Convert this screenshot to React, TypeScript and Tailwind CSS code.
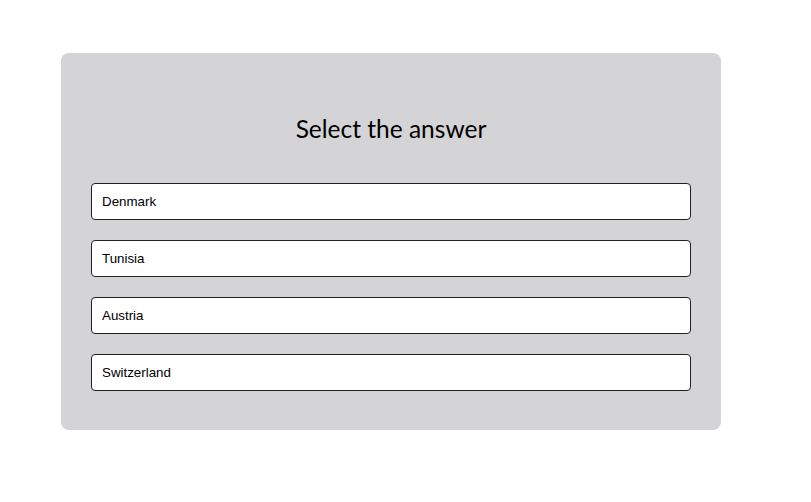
import React from 'react';

const answers = ['Denmark', 'Tunisia', 'Austria', 'Switzerland'];

export default function App() {
  return (
    <div className="min-h-screen bg-white pt-[53px] pl-[61px]">
      <div className="w-[660px] rounded-[8px] bg-[#d4d4d6] px-[30px] pt-[58px] pb-[39px]">
        <h1 className="text-center text-[24.5px] leading-[36px] text-black" style={{ fontFamily: 'Lato, sans-serif' }}>
          Select the answer
        </h1>
        <div className="mt-[36px] flex flex-col gap-[20px]">
          {answers.map((a) => (
            <button
              key={a}
              className="h-[37px] w-[600px] rounded-[4px] border border-[#222] bg-white px-[10px] text-left text-[13.333px] text-black"
              style={{ fontFamily: '"Liberation Sans", Arial, sans-serif' }}
            >
              {a}
            </button>
          ))}
        </div>
      </div>
    </div>
  );
}
